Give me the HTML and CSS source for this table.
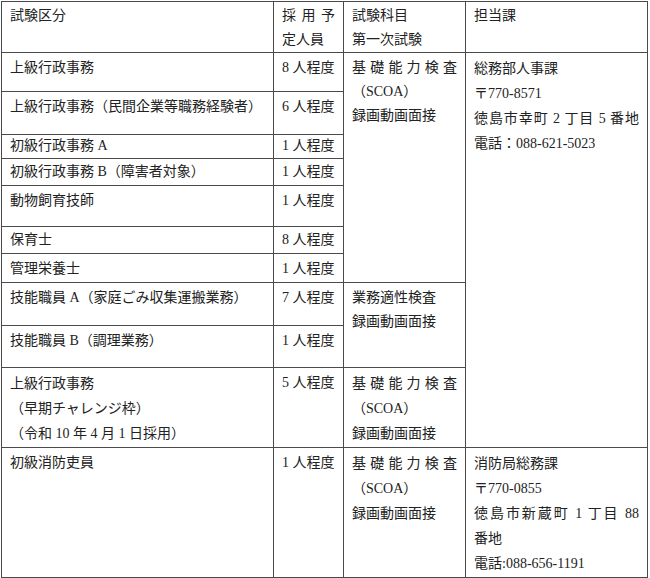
FILE: index.html
```html
<!DOCTYPE html>
<html lang="ja">
<head>
<meta charset="utf-8">
<title>試験区分</title>
<link rel="stylesheet" href="styles.css">
</head>
<body>
<table class="exam">
  <colgroup>
    <col class="c1"><col class="c2"><col class="c3"><col class="c4">
  </colgroup>
  <tr class="h-head">
    <td>試験区分</td>
    <td><div class="jl">採用予</div><div>定人員</div></td>
    <td><div>試験科目</div><div>第一次試験</div></td>
    <td>担当課</td>
  </tr>
  <tr class="h39">
    <td>上級行政事務</td>
    <td>8 人程度</td>
    <td rowspan="7"><div class="jl">基礎能力検査</div><div>（SCOA）</div><div>録画動画面接</div></td>
    <td rowspan="10" class="addr">
      <div>総務部人事課</div>
      <div>〒770-8571</div>
      <div class="jl">徳島市幸町 2 丁目 5 番地</div>
      <div>電話：088-621-5023</div>
    </td>
  </tr>
  <tr class="h43">
    <td>上級行政事務（民間企業等職務経験者）</td>
    <td>6 人程度</td>
  </tr>
  <tr class="h24">
    <td>初級行政事務 A</td>
    <td>1 人程度</td>
  </tr>
  <tr class="h27">
    <td>初級行政事務 B（障害者対象）</td>
    <td>1 人程度</td>
  </tr>
  <tr class="h41">
    <td>動物飼育技師</td>
    <td>1 人程度</td>
  </tr>
  <tr class="h27">
    <td>保育士</td>
    <td>8 人程度</td>
  </tr>
  <tr class="h29">
    <td>管理栄養士</td>
    <td>1 人程度</td>
  </tr>
  <tr class="h43">
    <td>技能職員 A（家庭ごみ収集運搬業務）</td>
    <td>7 人程度</td>
    <td rowspan="2"><div>業務適性検査</div><div>録画動画面接</div></td>
  </tr>
  <tr class="h42">
    <td>技能職員 B（調理業務）</td>
    <td>1 人程度</td>
  </tr>
  <tr class="h80">
    <td class="addr"><div>上級行政事務</div><div>（早期チャレンジ枠）</div><div>（令和 10 年 4 月 1 日採用）</div></td>
    <td>5 人程度</td>
    <td class="addr"><div class="jl">基礎能力検査</div><div>（SCOA）</div><div>録画動画面接</div></td>
  </tr>
  <tr class="h130">
    <td>初級消防吏員</td>
    <td>1 人程度</td>
    <td class="addr"><div class="jl">基礎能力検査</div><div>（SCOA）</div><div>録画動画面接</div></td>
    <td class="addr">
      <div>消防局総務課</div>
      <div>〒770-0855</div>
      <div class="jl">徳島市新蔵町 1 丁目 88</div>
      <div>番地</div>
      <div>電話:088-656-1191</div>
    </td>
  </tr>
</table>
</body>
</html>
```

FILE: styles.css
```css
html, body {
  margin: 0;
  padding: 0;
  background: #ffffff;
}
body {
  padding: 1px 0 0 1px;
  font-family: "Liberation Serif", "Noto Sans CJK JP", serif;
  font-size: 14px;
  color: #222222;
}
.exam {
  border-collapse: collapse;
  table-layout: fixed;
  width: 646px;
}
.c1 { width: 272px; }
.c2 { width: 70px; }
.c3 { width: 122px; }
.c4 { width: 182px; }
.exam td {
  border: 1px solid #4a4a4a;
  vertical-align: top;
  padding: 3px 8px 0 8px;
  line-height: 24px;
  overflow: hidden;
}
.exam td.addr {
  line-height: 25px;
}
.jl {
  text-align: justify;
  text-align-last: justify;
}
.h-head { height: 51px; }
.h-head td { padding-top: 2px; }
.h24 { height: 24px; }
.h27 { height: 27px; }
.h29 { height: 29px; }
.h39 { height: 39px; }
.h41 { height: 41px; }
.h42 { height: 42px; }
.h43 { height: 43px; }
.h80 { height: 80px; }
.h130 { height: 130px; }
.h24 td { padding-top: 0; line-height: 22px; }
.h27 td { padding-top: 1px; }
```
